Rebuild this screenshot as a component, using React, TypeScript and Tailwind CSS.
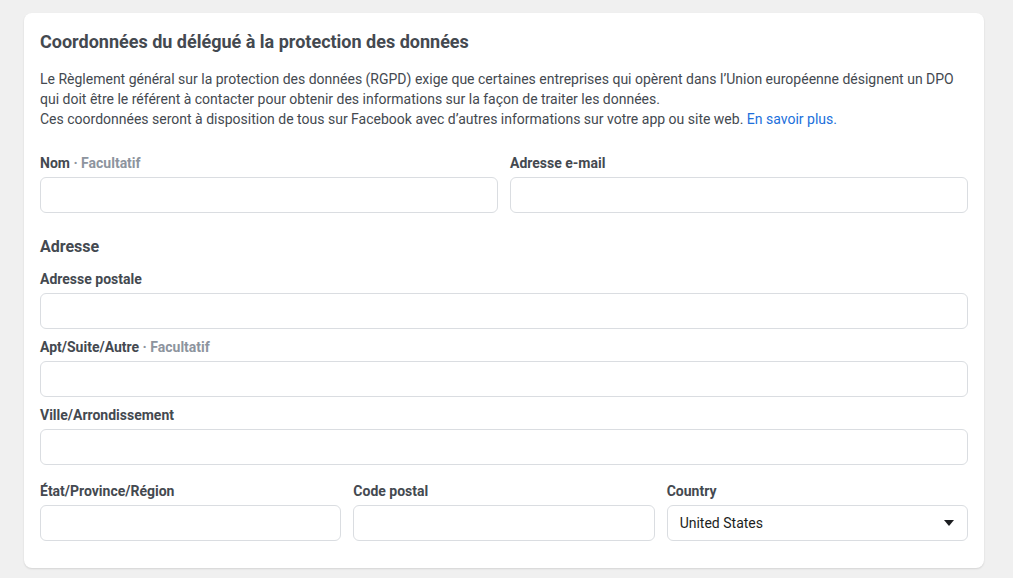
const Label = ({ text, optional }: { text: string; optional?: boolean }) => (
  <label className="block text-[14px] leading-4 font-bold text-[#444950] mb-1.5">
    {text}
    {optional && <span className="font-bold text-[#8d949e]"> · Facultatif</span>}
  </label>
);

const Input = () => (
  <input
    type="text"
    className="block w-full h-9 rounded-md border border-[#dadde1] bg-white px-3 text-[14px] outline-none"
  />
);

export default function App() {
  return (
    <div
      className="min-h-screen bg-[#f0f0f0] pt-[13px] pl-6"
      style={{ fontFamily: "Roboto, 'Liberation Sans', sans-serif" }}
    >
      <div className="w-[960px] rounded-lg bg-white px-4 pt-[17px] pb-[27px] shadow-[0_1px_2px_rgba(0,0,0,0.12)]">
        <h2 className="text-[18px] leading-6 font-bold text-[#444950]">
          Coordonnées du délégué à la protection des données
        </h2>
        <p className="mt-[15px] text-[14px] leading-5 text-[#444950]">
          Le Règlement général sur la protection des données (RGPD) exige que certaines entreprises qui opèrent dans l’Union européenne désignent un DPO qui doit être le référent à contacter pour obtenir des informations sur la façon de traiter les données.
          <br />
          Ces coordonnées seront à disposition de tous sur Facebook avec d’autres informations sur votre app ou site web.{" "}
          <a href="#" className="text-[#216fdb]">En savoir plus.</a>
        </p>

        <div className="mt-[26px] grid grid-cols-2 gap-3">
          <div>
            <Label text="Nom" optional />
            <Input />
          </div>
          <div>
            <Label text="Adresse e-mail" />
            <Input />
          </div>
        </div>

        <h3 className="mt-6 text-[16px] leading-5 font-bold text-[#444950]">Adresse</h3>

        <div className="mt-3.5">
          <Label text="Adresse postale" />
          <Input />
        </div>
        <div className="mt-2.5">
          <Label text="Apt/Suite/Autre" optional />
          <Input />
        </div>
        <div className="mt-2.5">
          <Label text="Ville/Arrondissement" />
          <Input />
        </div>

        <div className="mt-[18px] grid grid-cols-3 gap-3">
          <div>
            <Label text="État/Province/Région" />
            <Input />
          </div>
          <div>
            <Label text="Code postal" />
            <Input />
          </div>
          <div>
            <Label text="Country" />
            <div className="relative">
              <div className="flex h-9 items-center rounded-md border border-[#dadde1] bg-white px-3 text-[14px] text-[#1c1e21]">
                United States
              </div>
              <svg
                className="absolute right-[14px] top-[15px]"
                width="10"
                height="6"
                viewBox="0 0 10 6"
              >
                <path d="M0 0h10L5 6z" fill="#1c1e21" />
              </svg>
            </div>
          </div>
        </div>
      </div>
    </div>
  );
}
